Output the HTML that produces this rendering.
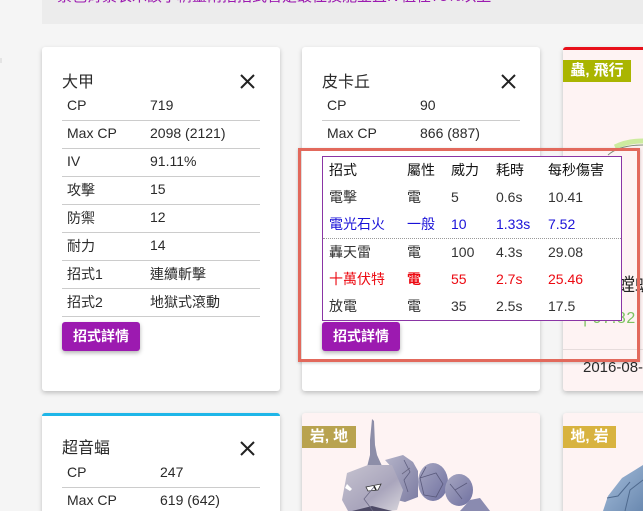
<!DOCTYPE html>
<html><head><meta charset="utf-8">
<style>
html,body{margin:0;padding:0;width:643px;height:511px;overflow:hidden;background:#f5f5f5}
body{position:relative;font-family:"Liberation Sans","Noto Sans CJK TC",sans-serif;font-size:14px;color:#2a2a2a}
.c{position:absolute;background:#fff;border-radius:3px;box-shadow:0 2px 5px rgba(0,0,0,.22);overflow:hidden}
.t{position:absolute;white-space:nowrap;line-height:20px;height:20px}
.l{position:absolute;height:1px;background:#ccc}
.ti{font-size:16px}
.b{position:absolute;background:#9c1ab0;color:#fff;font-weight:bold;font-size:14px;border-radius:3px;box-shadow:0 2px 4px rgba(0,0,0,.3);text-align:center}
.tag{position:absolute;color:#fff;font-weight:bold;font-size:15px;text-align:center;line-height:22px;height:22px}
svg{position:absolute}
</style></head><body>
<div style="position:absolute;left:0;top:58px;width:2px;height:5px;background:#e4e4e4"></div>
<div style="position:absolute;left:42px;top:0;width:601px;height:24px;background:#ececec;overflow:hidden">
<span class="t" style="left:15px;top:-13px;font-size:15px;color:#9c1ab0">紫色背景表示該小精靈兩招招式皆是最佳技能並且IV值在75%以上</span></div>

<div class="c" style="left:42px;top:47px;width:238px;height:344px"></div>
<div class="c" style="left:302px;top:47px;width:238px;height:344px"></div>
<div class="c" style="left:563px;top:47px;width:90px;height:344px;background:#fef3f3;border-top:3px solid #e8101a;box-sizing:border-box"></div>
<div class="c" style="left:42px;top:413px;width:238px;height:120px;border-top:3px solid #1eb6e8;box-sizing:border-box"></div>
<div class="c" style="left:302px;top:413px;width:238px;height:120px;background:#fef3f3"></div>
<div class="c" style="left:563px;top:413px;width:90px;height:120px;background:#fef3f3"></div>

<div class="tag" style="left:563px;top:60px;width:68px;background:#aab500">蟲, 飛行</div>

<!-- card 1 -->
<span class="t ti" style="left:62px;top:73px">大甲</span>
<svg style="left:240px;top:74px" width="15" height="15" viewBox="0 0 15 15"><path d="M1 1L14 14M14 1L1 14" stroke="#222" stroke-width="2" fill="none"/></svg>
<span class="t" style="left:67px;top:95px">CP</span><span class="t" style="left:150px;top:95px">719</span>
<div class="l" style="left:62px;top:120px;width:198px"></div>
<span class="t" style="left:67px;top:123px">Max CP</span><span class="t" style="left:150px;top:123px">2098 (2121)</span>
<div class="l" style="left:62px;top:148px;width:198px"></div>
<span class="t" style="left:67px;top:151px">IV</span><span class="t" style="left:150px;top:151px">91.11%</span>
<div class="l" style="left:62px;top:176px;width:198px"></div>
<span class="t" style="left:67px;top:180px">攻擊</span><span class="t" style="left:150px;top:179px">15</span>
<div class="l" style="left:62px;top:204px;width:198px"></div>
<span class="t" style="left:67px;top:208px">防禦</span><span class="t" style="left:150px;top:207px">12</span>
<div class="l" style="left:62px;top:232px;width:198px"></div>
<span class="t" style="left:67px;top:236px">耐力</span><span class="t" style="left:150px;top:235px">14</span>
<div class="l" style="left:62px;top:260px;width:198px"></div>
<span class="t" style="left:67px;top:264px">招式1</span><span class="t" style="left:150px;top:264px">連續斬擊</span>
<div class="l" style="left:62px;top:288px;width:198px"></div>
<span class="t" style="left:67px;top:292px">招式2</span><span class="t" style="left:150px;top:292px">地獄式滾動</span>
<div class="l" style="left:62px;top:316px;width:198px"></div>
<div class="b" style="left:62px;top:322px;width:78px;height:29px;line-height:28px">招式詳情</div>

<!-- card 2 -->
<span class="t ti" style="left:322px;top:73px">皮卡丘</span>
<svg style="left:501px;top:74px" width="15" height="15" viewBox="0 0 15 15"><path d="M1 1L14 14M14 1L1 14" stroke="#222" stroke-width="2" fill="none"/></svg>
<span class="t" style="left:327px;top:95px">CP</span><span class="t" style="left:420px;top:95px">90</span>
<div class="l" style="left:322px;top:120px;width:198px"></div>
<span class="t" style="left:327px;top:123px">Max CP</span><span class="t" style="left:420px;top:123px">866 (887)</span>
<div class="l" style="left:322px;top:148px;width:198px"></div>
<span class="t" style="left:327px;top:151px">IV</span><span class="t" style="left:420px;top:151px">51.11%</span>
<div class="b" style="left:322px;top:322px;width:78px;height:29px;line-height:28px">招式詳情</div>

<!-- card 3 pieces -->
<svg style="left:563px;top:50px" width="80" height="120" viewBox="0 0 80 120"><path d="M52 97C60 93 70 91 80 91" stroke="#cdeb9f" stroke-width="5" fill="none"/><path d="M45 105C54 97 68 95 80 95" stroke="#7f8f78" stroke-width="1" fill="none"/></svg>
<span class="t" style="left:617px;top:275px;font-size:18px;color:#222">螳蜆</span>
<span class="t" style="left:583px;top:309px;font-size:16px;letter-spacing:.6px;color:#7cc35f">| 97.82</span>
<div class="l" style="left:563px;top:349px;width:80px;background:#e6dcdc"></div>
<span class="t" style="left:583px;top:358px;font-size:15px">2016-08-20</span>

<!-- red annotation and table -->
<div style="position:absolute;left:298px;top:148px;width:342px;height:214px;box-sizing:border-box;border:3px solid #e2695c;box-shadow:0 1px 3px rgba(0,0,0,.2)"></div>
<div style="position:absolute;left:322px;top:156px;width:300px;height:165px;box-sizing:border-box;background:#fff;border:1px solid #8a35a5"></div>
<div style="position:absolute;left:323px;top:238px;width:298px;border-top:1px dotted #999"></div>
<div style="color:#111">
<span class="t" style="left:329px;top:160px">招式</span><span class="t" style="left:407px;top:160px">屬性</span><span class="t" style="left:451px;top:160px">威力</span><span class="t" style="left:496px;top:160px">耗時</span><span class="t" style="left:548px;top:160px">每秒傷害</span>
</div>
<div style="color:#333">
<span class="t" style="left:329px;top:187px">電擊</span><span class="t" style="left:407px;top:187px">電</span><span class="t" style="left:451px;top:187px">5</span><span class="t" style="left:496px;top:187px">0.6s</span><span class="t" style="left:548px;top:187px">10.41</span>
</div>
<div style="color:#1a12d8">
<span class="t" style="left:329px;top:214px">電光石火</span><span class="t" style="left:407px;top:214px">一般</span><span class="t" style="left:451px;top:214px">10</span><span class="t" style="left:496px;top:214px">1.33s</span><span class="t" style="left:548px;top:214px">7.52</span>
</div>
<div style="color:#333">
<span class="t" style="left:329px;top:242px">轟天雷</span><span class="t" style="left:407px;top:242px">電</span><span class="t" style="left:451px;top:242px">100</span><span class="t" style="left:496px;top:242px">4.3s</span><span class="t" style="left:548px;top:242px">29.08</span>
</div>
<div style="color:#ec0a12">
<span class="t" style="left:329px;top:269px">十萬伏特</span><span class="t" style="left:407px;top:269px;font-weight:bold">電</span><span class="t" style="left:451px;top:269px">55</span><span class="t" style="left:496px;top:269px">2.7s</span><span class="t" style="left:548px;top:269px">25.46</span>
</div>
<div style="color:#333">
<span class="t" style="left:329px;top:296px">放電</span><span class="t" style="left:407px;top:296px">電</span><span class="t" style="left:451px;top:296px">35</span><span class="t" style="left:496px;top:296px">2.5s</span><span class="t" style="left:548px;top:296px">17.5</span>
</div>

<!-- bottom-left card -->
<span class="t ti" style="left:62px;top:439px">超音蝠</span>
<svg style="left:240px;top:441px" width="15" height="15" viewBox="0 0 15 15"><path d="M1 1L14 14M14 1L1 14" stroke="#222" stroke-width="2" fill="none"/></svg>
<span class="t" style="left:67px;top:462px">CP</span><span class="t" style="left:160px;top:462px">247</span>
<div class="l" style="left:62px;top:487px;width:198px"></div>
<span class="t" style="left:67px;top:490px">Max CP</span><span class="t" style="left:160px;top:490px">619 (642)</span>

<!-- Onix -->
<svg style="left:290px;top:410px" width="353" height="101" viewBox="290 410 353 101">
<defs>
<linearGradient id="g1" x1="0" y1="0" x2="1" y2="1"><stop offset="0" stop-color="#b4b3c8"/><stop offset="1" stop-color="#7d7da3"/></linearGradient>
<linearGradient id="g2" x1="0" y1="0" x2="1" y2="1"><stop offset="0" stop-color="#a8a8c2"/><stop offset="1" stop-color="#6f70a0"/></linearGradient>
<linearGradient id="g3" x1="0" y1="0" x2="1" y2="1"><stop offset="0" stop-color="#c6c3d0"/><stop offset=".6" stop-color="#a9a5bc"/><stop offset="1" stop-color="#d8d6dc"/></linearGradient>
<linearGradient id="g4" x1="0" y1="0" x2="1" y2="1"><stop offset="0" stop-color="#a6bedb"/><stop offset="1" stop-color="#6a89b0"/></linearGradient>
</defs>
<path d="M372 419L374 421L375 445L377 455L382 466L367 467L370 455L370 440Z" fill="#8d8ea8"/>
<path d="M385 460L403 455L413 462L418 471L418 497L405 502L397 500L394 470Z" fill="url(#g1)"/>
<path d="M404 460L410 472L404 480L408 492" fill="none" stroke="#5f5f80" stroke-width=".8"/>
<ellipse cx="433" cy="482" rx="15" ry="19" fill="url(#g2)"/>
<ellipse cx="459" cy="490" rx="14" ry="16" fill="url(#g2)"/>
<path d="M460 511L470 500L480 498L490 511Z" fill="#8a8bb0"/>
<path d="M342 500L347 473L368 465L392 465L403 490L397 510L390 511L348 511Z" fill="url(#g3)"/>
<path d="M352 511L372 506L392 511Z" fill="#4e4a66"/>
<path d="M347 484L352 489L350 491L345 488Z" fill="#fff"/>
<path d="M366 487L381 484L378 490L368 491Z" fill="#fff" stroke="#333" stroke-width=".8"/>
<path d="M374 486L376 490" stroke="#222" stroke-width="1.5"/>
<path d="M426 467L420 478L424 495M420 478L436 473L443 484L436 497L424 495M467 483L455 490L462 499M455 490L450 484" fill="none" stroke="#5a5a7c" stroke-width=".8"/>
<path d="M373 511L364 499L374 487M402 474L410 468" fill="none" stroke="#6c6a85" stroke-width=".8"/>
<path d="M603 511L608 496L622 478L643 465L643 511Z" fill="url(#g4)"/>
<path d="M607 498L618 496L630 482M625 511L630 490L643 480" fill="none" stroke="#4f6a8e" stroke-width="1"/>
</svg>
<div class="tag" style="left:302px;top:426px;width:54px;background:#b9a34f">岩, 地</div>
<div class="tag" style="left:563px;top:426px;width:53px;background:#d8b33f">地, 岩</div>
</body></html>
